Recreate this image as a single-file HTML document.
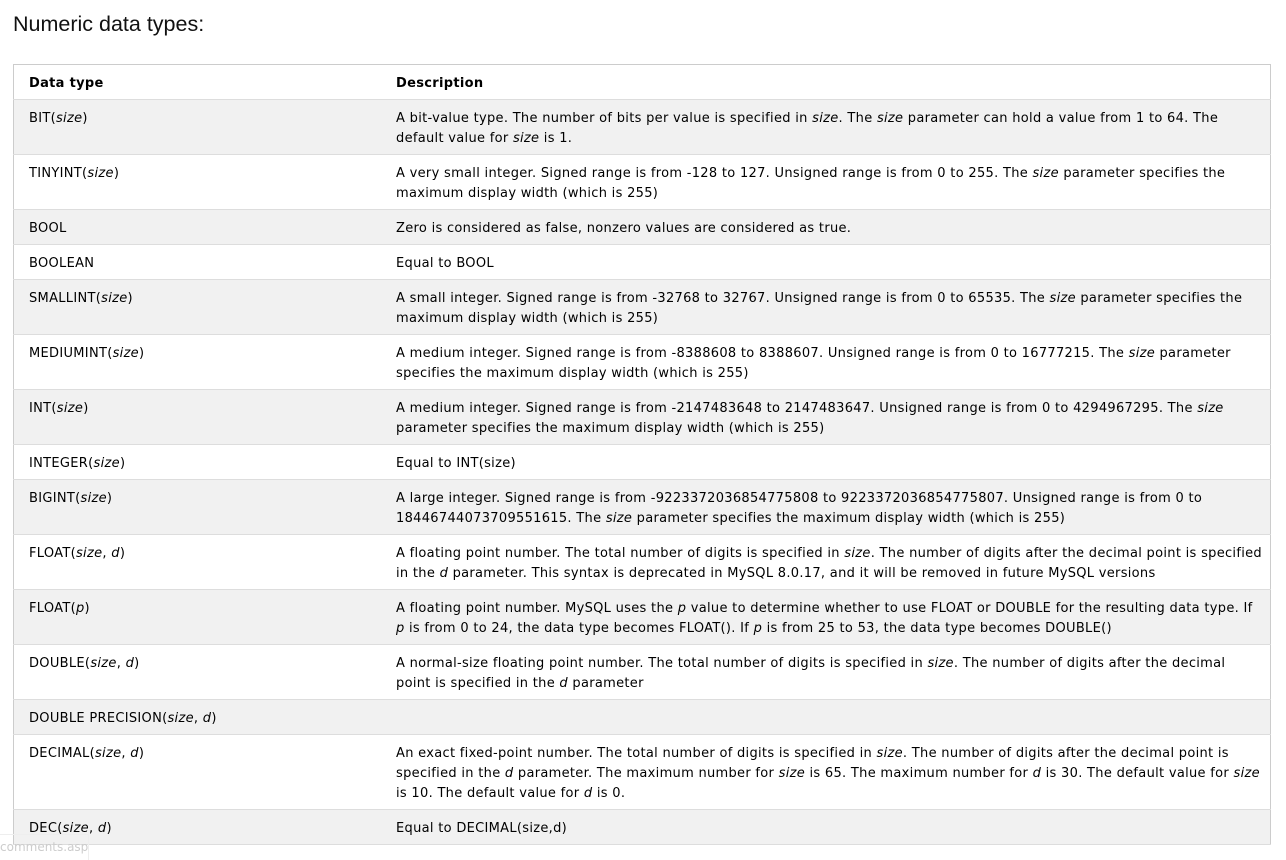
<!DOCTYPE html>
<html><head><meta charset="utf-8"><style>
body{margin:0;background:#fff;font-family:"DejaVu Sans","Liberation Sans",sans-serif;color:#000;width:1286px;height:856px;overflow:hidden;position:relative}
h2{position:absolute;left:13px;top:9px;margin:0;font-weight:normal;font-size:21.5px;line-height:30px;color:#111;font-family:"Liberation Sans",sans-serif}
table{position:absolute;left:13px;top:64px;width:1258px;border-collapse:collapse;border:1px solid #ccc;font-size:13px}
td,th{padding:9px 8px 5px 15px;line-height:20px;vertical-align:top;text-align:left;white-space:nowrap;letter-spacing:0.3px}
th{font-weight:bold;height:20px}
tr{border-bottom:1px solid #ddd}
tr:nth-child(even){background:#f1f1f1}
td:first-child,th:first-child{width:346px}
.c{position:absolute;left:0;top:834px;font-size:12px;color:#ccc;padding:5px 8px 0 0;border-right:1px solid #eee;border-top:1px solid #eee;width:80px;height:20px;font-family:"DejaVu Sans",sans-serif}
</style></head><body>
<h2>Numeric data types:</h2>
<table>
<tr><th>Data type</th><th>Description</th></tr>
<tr><td>BIT(<i>size</i>)</td><td>A bit-value type. The number of bits per value is specified in <i>size</i>. The <i>size</i> parameter can hold a value from 1 to 64. The<br>default value for <i>size</i> is 1.</td></tr>
<tr><td>TINYINT(<i>size</i>)</td><td>A very small integer. Signed range is from -128 to 127. Unsigned range is from 0 to 255. The <i>size</i> parameter specifies the<br>maximum display width (which is 255)</td></tr>
<tr><td>BOOL</td><td>Zero is considered as false, nonzero values are considered as true.</td></tr>
<tr><td>BOOLEAN</td><td>Equal to BOOL</td></tr>
<tr><td>SMALLINT(<i>size</i>)</td><td>A small integer. Signed range is from -32768 to 32767. Unsigned range is from 0 to 65535. The <i>size</i> parameter specifies the<br>maximum display width (which is 255)</td></tr>
<tr><td>MEDIUMINT(<i>size</i>)</td><td>A medium integer. Signed range is from -8388608 to 8388607. Unsigned range is from 0 to 16777215. The <i>size</i> parameter<br>specifies the maximum display width (which is 255)</td></tr>
<tr><td>INT(<i>size</i>)</td><td>A medium integer. Signed range is from -2147483648 to 2147483647. Unsigned range is from 0 to 4294967295. The <i>size</i><br>parameter specifies the maximum display width (which is 255)</td></tr>
<tr><td>INTEGER(<i>size</i>)</td><td>Equal to INT(size)</td></tr>
<tr><td>BIGINT(<i>size</i>)</td><td>A large integer. Signed range is from -9223372036854775808 to 9223372036854775807. Unsigned range is from 0 to<br>18446744073709551615. The <i>size</i> parameter specifies the maximum display width (which is 255)</td></tr>
<tr><td>FLOAT(<i>size</i>, <i>d</i>)</td><td>A floating point number. The total number of digits is specified in <i>size</i>. The number of digits after the decimal point is specified<br>in the <i>d</i> parameter. This syntax is deprecated in MySQL 8.0.17, and it will be removed in future MySQL versions</td></tr>
<tr><td>FLOAT(<i>p</i>)</td><td>A floating point number. MySQL uses the <i>p</i> value to determine whether to use FLOAT or DOUBLE for the resulting data type. If<br><i>p</i> is from 0 to 24, the data type becomes FLOAT(). If <i>p</i> is from 25 to 53, the data type becomes DOUBLE()</td></tr>
<tr><td>DOUBLE(<i>size</i>, <i>d</i>)</td><td>A normal-size floating point number. The total number of digits is specified in <i>size</i>. The number of digits after the decimal<br>point is specified in the <i>d</i> parameter</td></tr>
<tr><td>DOUBLE PRECISION(<i>size</i>, <i>d</i>)</td><td>&nbsp;</td></tr>
<tr><td>DECIMAL(<i>size</i>, <i>d</i>)</td><td>An exact fixed-point number. The total number of digits is specified in <i>size</i>. The number of digits after the decimal point is<br>specified in the <i>d</i> parameter. The maximum number for <i>size</i> is 65. The maximum number for <i>d</i> is 30. The default value for <i>size</i><br>is 10. The default value for <i>d</i> is 0.</td></tr>
<tr><td>DEC(<i>size</i>, <i>d</i>)</td><td>Equal to DECIMAL(size,d)</td></tr>
</table>
<div class="c">comments.asp</div>
</body></html>
